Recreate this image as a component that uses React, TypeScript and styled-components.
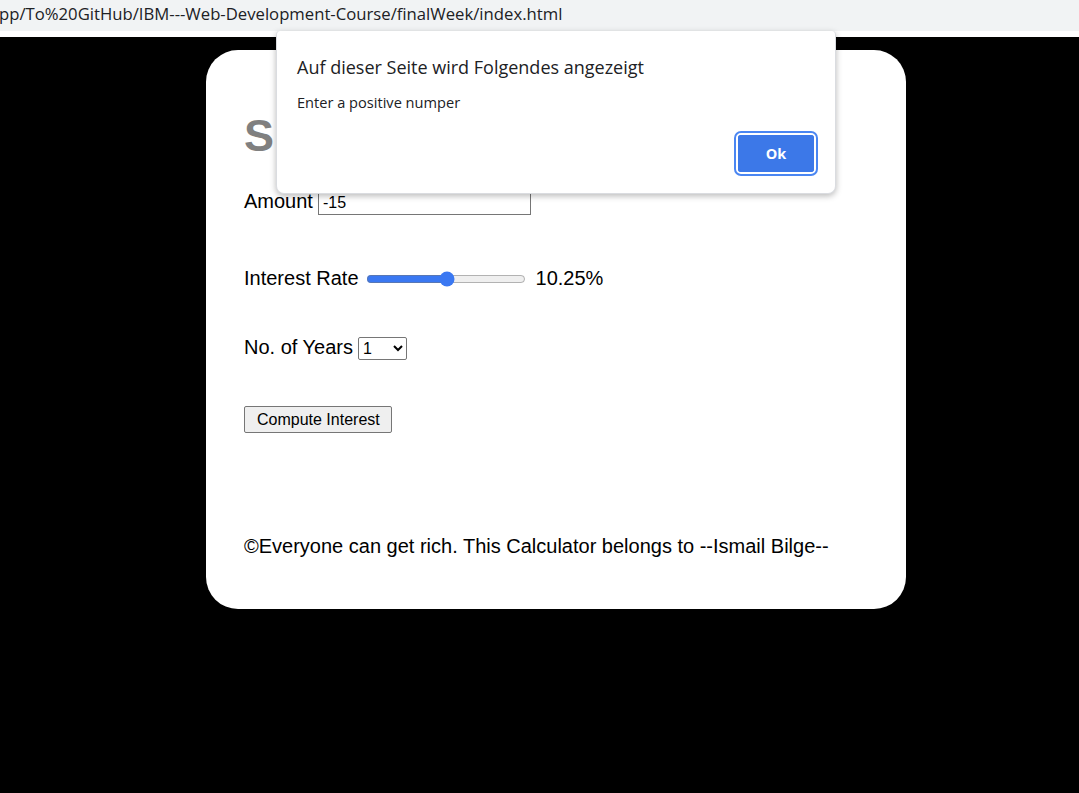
import React from "react";
import styled, { createGlobalStyle } from "styled-components";

const GlobalStyle = createGlobalStyle`
  html, body {
    margin: 0;
    padding: 0;
    background: #000;
  }
  body {
    font-family: "Liberation Sans", Arial, sans-serif;
    overflow: hidden;
  }
`;

const Page = styled.div`
  position: relative;
  width: 1079px;
  height: 793px;
  background: #000;
`;

const AddressBar = styled.div`
  height: 31px;
  background: #f1f3f4;
  border-bottom: 6px solid #fff;
  display: flex;
  align-items: center;
  overflow: hidden;
  white-space: nowrap;
`;

const Url = styled.span`
  font-family: "Open Sans", "Noto Sans", sans-serif;
  font-size: 16.7px;
  color: #202124;
  margin-left: -1px;
  margin-top: -4px;
`;

const Card = styled.div`
  margin: 13px 0 0 206px;
  width: 700px;
  box-sizing: border-box;
  padding: 60px 38px 51px;
  background: #fff;
  border-radius: 32px;
  color: #000;
`;

const Title = styled.h1`
  margin: 0;
  font-size: 45px;
  font-weight: bold;
  color: #808080;
  line-height: 52px;
`;

const Field = styled.div<{ $gap: number }>`
  display: flex;
  align-items: center;
  margin-top: ${p => p.$gap}px;
  font-size: 20px;
  line-height: 23px;
`;

const Label = styled.label<{ $lift?: number }>`
  margin-right: 5px;
  position: relative;
  top: ${p => -(p.$lift || 0)}px;
`;

const AmountInput = styled.input`
  width: 213px;
  height: 24px;
  box-sizing: border-box;
  border: 1px solid #767676;
  padding: 1px 4px;
  font-family: "Liberation Sans", Arial, sans-serif;
  font-size: 16px;
  color: #000;
  outline: none;
`;

const Range = styled.input`
  width: 160px;
  margin: 0 10px 0 2px;
  accent-color: #3a78f2;
`;

const YearSelect = styled.select`
  width: 49px;
  height: 23px;
  font-family: "Liberation Sans", Arial, sans-serif;
  font-size: 16px;
  border: 1px solid #767676;
  border-radius: 2px;
  background: #fff;
  color: #000;
`;

const ComputeButton = styled.button`
  height: 27px;
  padding: 1px 11px 1px 12px;
  font-family: "Liberation Sans", Arial, sans-serif;
  font-size: 16px;
  color: #000;
  background: #efefef;
  border: 1px solid #767676;
  border-radius: 2px;
`;

const Footer = styled.p<{ $gap: number }>`
  margin: ${p => p.$gap}px 0 0;
  font-size: 20px;
  line-height: 23px;
`;

const Dialog = styled.div`
  position: absolute;
  left: 276px;
  top: 31px;
  width: 560px;
  height: 163px;
  box-sizing: border-box;
  padding: 24px 20px 20px;
  background: #fff;
  border: 1px solid #dadce0;
  border-top: none;
  border-radius: 4px 4px 8px 8px;
  box-shadow: 0 2px 6px rgba(0, 0, 0, 0.28);
  display: flex;
  flex-direction: column;
  font-family: "Open Sans", "Noto Sans", sans-serif;
  color: #202124;
`;

const DialogTitle = styled.div`
  font-size: 18px;
  line-height: 24px;
`;

const DialogMessage = styled.div`
  margin-top: 14px;
  font-size: 14.6px;
  line-height: 18px;
`;

const DialogActions = styled.div`
  margin-top: auto;
  display: flex;
  justify-content: flex-end;
  margin-right: -1px;
  margin-bottom: -1px;
`;

const OkButton = styled.button`
  width: 80px;
  height: 41px;
  box-sizing: border-box;
  background: #3c78e8;
  border: 2px solid #fff;
  outline: 2px solid #3c78e8;
  outline-offset: -4px;
  box-shadow: 0 0 0 2px #4a86f2;
  border-radius: 5px;
  color: #fff;
  font-family: "Open Sans", "Noto Sans", sans-serif;
  font-weight: 700;
  font-size: 14.5px;
`;

const App: React.FC = () => {
  return (
    <Page>
      <GlobalStyle />
      <AddressBar>
        <Url>pp/To%20GitHub/IBM---Web-Development-Course/finalWeek/index.html</Url>
      </AddressBar>
      <Card>
        <Title>Simple Interest Calculator</Title>
        <Field $gap={29}>
          <Label htmlFor="amount" $lift={2}>
            Amount
          </Label>
          <AmountInput id="amount" type="number" defaultValue="-15" />
        </Field>
        <Field $gap={52}>
          <Label htmlFor="rate">Interest Rate</Label>
          <Range id="rate" type="range" min={0} max={20} step={0.25} defaultValue={10.25} />
          <span>10.25%</span>
        </Field>
        <Field $gap={47}>
          <Label htmlFor="years" $lift={1}>
            No. of Years
          </Label>
          <YearSelect id="years" defaultValue="1">
            {[1, 2, 3, 4, 5, 6, 7, 8, 9, 10].map(y => (
              <option key={y} value={y}>
                {y}
              </option>
            ))}
          </YearSelect>
        </Field>
        <Field $gap={46}>
          <ComputeButton>Compute Interest</ComputeButton>
        </Field>
        <Footer $gap={102}>©Everyone can get rich. This Calculator belongs to --Ismail Bilge--</Footer>
      </Card>
      <Dialog role="alertdialog">
        <DialogTitle>Auf dieser Seite wird Folgendes angezeigt</DialogTitle>
        <DialogMessage>Enter a positive numper</DialogMessage>
        <DialogActions>
          <OkButton>Ok</OkButton>
        </DialogActions>
      </Dialog>
    </Page>
  );
};

export default App;
